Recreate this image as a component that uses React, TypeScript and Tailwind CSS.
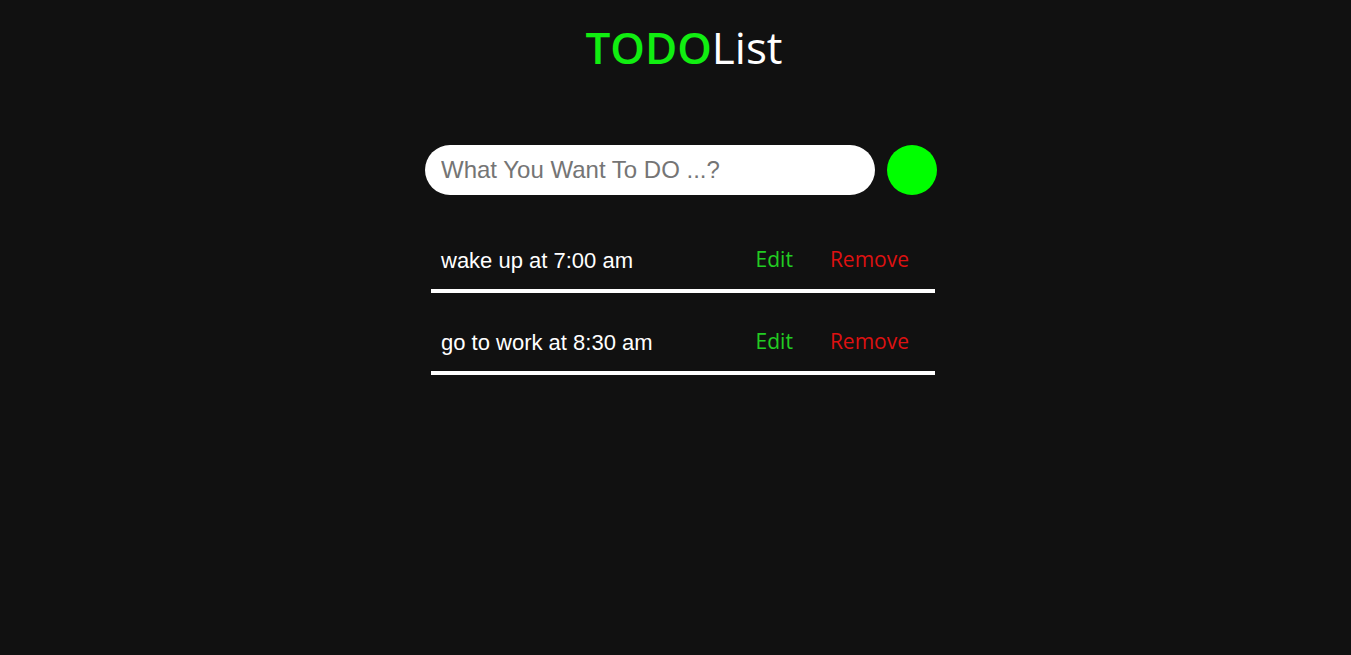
import React from 'react'

const todos = ['wake up at 7:00 am', 'go to work at 8:30 am']

export default function App() {
  return (
    <div className="min-h-[655px] w-full bg-[#111111] flex justify-center pl-[11px]" style={{ fontFamily: '"Liberation Sans", Arial, sans-serif' }}>
      <div className="w-[512px] flex flex-col items-center">
        <h1 className="mt-[17px] text-[44px] leading-[60px] font-['Open_Sans',sans-serif] pl-[6px]">
          <span className="text-[#11ee11] font-semibold">TODO</span>
          <span className="text-white">List</span>
        </h1>

        <form className="mt-[68px] flex items-center gap-[12px] w-full" onSubmit={(e) => e.preventDefault()}>
          <input
            type="text"
            placeholder="What You Want To DO ...?"
            className="w-[450px] h-[50px] rounded-full bg-white px-4 text-[24px] text-black placeholder:text-[#757575] outline-none"
          />
          <button type="submit" className="w-[50px] h-[50px] rounded-full bg-[#00ff00]" />
        </form>

        <ul className="mt-[38px] w-[504px] ml-[4px] flex flex-col gap-[22px]">
          {todos.map((t) => (
            <li key={t} className="flex items-center h-[60px] pl-[10px] pr-[26px] border-b-4 border-white">
              <span className="flex-1 text-white text-[22px] pb-[2px]">{t}</span>
              <button className="text-[#22cc22] text-[21px] font-medium font-['Open_Sans',sans-serif] pb-[2px]">Edit</button>
              <button className="ml-[37px] text-[#dd1111] text-[21px] font-medium font-['Open_Sans',sans-serif] pb-[2px]">Remove</button>
            </li>
          ))}
        </ul>
      </div>
    </div>
  )
}
